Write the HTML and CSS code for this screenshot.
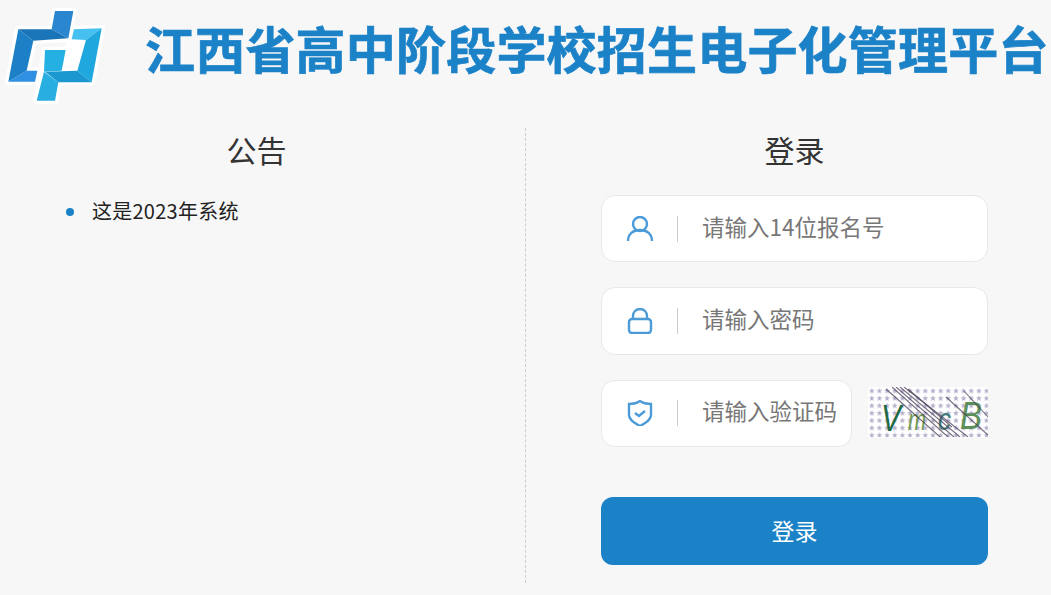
FILE: index.html
```html
<!DOCTYPE html>
<html lang="zh-CN">
<head>
    <meta charset="UTF-8">
    <title>江西省高中阶段学校招生电子化管理平台</title>
    <link rel="stylesheet" href="styles.css">
</head>
<body>
    <div class="header">
        <svg class="logo" viewBox="0 0 330 330">
            <!-- white outline behind the mark -->
            <g fill="#fff" stroke="#fff" stroke-width="20" stroke-linejoin="round">
                <polygon points="165,33 220,33 205,115 100,122 80,212 112,212 105,245 25,245 55,88 155,88"/>
                <polygon points="222,88 305,85 275,247 175,247 165,302 110,302 135,150 197,150 215,118"/>
            </g>
            <polygon fill="#1d7fc6" points="55,88 25,245 80,212 100,122"/>
            <polygon fill="#1a75b8" points="55,88 155,88 205,115 100,122"/>
            <polygon fill="#2a86cf" points="165,33 220,33 205,115 155,88"/>
            <polygon fill="#2f8fe0" points="25,245 105,245 112,212 80,212"/>
            <polygon fill="#45c0f0" points="222,88 305,85 258,120 215,118"/>
            <polygon fill="#1fa8de" points="305,85 275,247 232,212 258,120"/>
            <polygon fill="#1b98cf" points="135,215 232,212 275,247 175,247"/>
            <polygon fill="#25b0e4" points="135,150 197,150 185,212 132,215"/>
            <polygon fill="#29aee2" points="132,215 175,247 165,302 110,302"/>
        </svg>
        <h1 class="site-title">江西省高中阶段学校招生电子化管理平台</h1>
    </div>

    <div class="main">
        <div class="notice">
            <h2 class="panel-title">公告</h2>
            <ul class="notice-list">
                <li>这是2023年系统</li>
            </ul>
        </div>

        <div class="login">
            <h2 class="panel-title">登录</h2>
            <div class="field">
                <svg class="field-icon" viewBox="2 2 26 26">
                    <circle cx="15" cy="10" r="7"/>
                    <path d="M3 27c0-7 5-11 12-11s12 4 12 11"/>
                </svg>
                <input type="text" placeholder="请输入14位报名号">
            </div>
            <div class="field">
                <svg class="field-icon" viewBox="2 2 26 26">
                    <rect x="4" y="13" width="22" height="14" rx="3"/>
                    <path d="M8 13v-3c0-4 3-7 7-7s7 3 7 7v3"/>
                </svg>
                <input type="password" placeholder="请输入密码">
            </div>
            <div class="code-row">
                <div class="field field-code">
                    <svg class="field-icon" viewBox="2 2 26 26">
                        <path d="M15 3c3 2 7 3 11 3v11c0 5-5 8-11 11C9 25 4 22 4 17V6c4 0 8-1 11-3z"/>
                        <path d="M10 15l4 3 6-5"/>
                    </svg>
                    <input type="text" placeholder="请输入验证码">
                </div>
                <svg class="captcha" viewBox="0 0 120 50">
                    <defs>
                        <pattern id="stars" width="7.65" height="7.4" patternUnits="userSpaceOnUse">
                            <rect width="7.65" height="7.4" fill="none"/>
                            <polygon class="star" points="3.8,0.8 4.6,3 6.8,3 5,4.4 5.7,6.6 3.8,5.3 1.9,6.6 2.6,4.4 0.8,3 3,3"/>
                        </pattern>
                    </defs>
                    <rect width="120" height="50" fill="#fff"/>
                    <rect width="120" height="50" fill="url(#stars)"/>
                    <text x="13" y="44" class="cap cap-v" textLength="20" lengthAdjust="spacingAndGlyphs">V</text>
                    <text x="40" y="43" class="cap cap-m" textLength="18" lengthAdjust="spacingAndGlyphs">m</text>
                    <text x="70" y="43" class="cap cap-c" textLength="13" lengthAdjust="spacingAndGlyphs">c</text>
                    <text x="92" y="42" class="cap cap-b" textLength="22" lengthAdjust="spacingAndGlyphs">B</text>
                    <g class="noise">
                        <line x1="18" y1="2" x2="72" y2="50"/>
                        <line x1="24" y1="0" x2="80" y2="50"/>
                        <line x1="28" y1="0" x2="86" y2="50"/>
                        <line x1="32" y1="0" x2="92" y2="50"/>
                        <line x1="36" y1="0" x2="100" y2="50"/>
                        <line x1="40" y1="2" x2="84" y2="40"/>
                        <line x1="78" y1="10" x2="120" y2="48"/>
                        <line x1="96" y1="4" x2="120" y2="30"/>
                    </g>
                </svg>
            </div>
            <button class="login-btn">登录</button>
        </div>
    </div>
</body>
</html>
```

FILE: styles.css
```css
* {
    box-sizing: border-box;
}

html, body {
    height: 100%;
}

body {
    margin: 0;
    background: #f7f7f7;
    color: #333;
    font-family: "Noto Sans CJK SC", "Liberation Sans", sans-serif;
    overflow: hidden;
}

.header {
    display: flex;
    align-items: center;
    height: 110px;
}

.logo {
    width: 110px;
    height: 110px;
    flex: none;
}

.site-title {
    margin: -16px 0 0 35px;
    font-size: 50px;
    font-weight: 700;
    line-height: 60px;
    letter-spacing: 0.2px;
    color: #1c82c8;
    white-space: nowrap;
    -webkit-text-stroke: 0.7px #1c82c8;
}

.main {
    display: flex;
    margin-top: 18px;
    height: 455px;
}

.notice {
    width: 526px;
    padding-right: 12px;
    border-right: 1px dashed #ccc;
}

.panel-title {
    margin: 0;
    font-size: 30px;
    font-weight: 400;
    line-height: 42px;
    text-align: center;
}

.notice-list {
    margin: 26px 0 0;
    padding: 0 0 0 92px;
    list-style: none;
    font-size: 20px;
    line-height: 30px;
    letter-spacing: 0.25px;
    color: #222;
}

.notice-list li {
    position: relative;
}

.notice-list li::before {
    content: "";
    position: absolute;
    left: -26px;
    top: 12px;
    width: 8px;
    height: 8px;
    border-radius: 50%;
    background: #1c82c8;
}

.login {
    width: 387px;
    margin-left: 75px;
}

.login .panel-title {
    margin-bottom: 25px;
}

.field {
    display: flex;
    align-items: center;
    height: 67.4px;
    margin-bottom: 25px;
    background: #fff;
    border: 1px solid #e8e8e8;
    border-radius: 14px;
}

.field-icon {
    width: 26px;
    height: 26px;
    margin-left: 25px;
    flex: none;
    fill: none;
    stroke: #4a9bd8;
    stroke-width: 2.4;
}

.field input {
    flex: 1;
    min-width: 0;
    height: 26px;
    margin-left: 24px;
    padding: 0 0 6px 24px;
    border: none;
    border-left: 1px solid #ccc;
    outline: none;
    background: transparent;
    font-family: inherit;
    font-size: 22.5px;
}

.field input::placeholder {
    color: #777;
}

.code-row {
    display: flex;
    justify-content: space-between;
    align-items: flex-start;
}

.field-code {
    width: 251px;
    margin-bottom: 0;
}

.captcha {
    width: 120px;
    height: 50px;
    margin-top: 7px;
}

.star {
    fill: #b5accb;
}

.noise line {
    stroke: #4a3f55;
    stroke-width: 1.1;
    opacity: 0.75;
}

.cap {
    font-family: "Liberation Sans", sans-serif;
    font-size: 36px;
    font-style: italic;
}

.cap-v { fill: #1f6a45; }
.cap-m { fill: #6f9a55; font-size: 30px; }
.cap-c { fill: #3f7f80; font-size: 32px; }
.cap-b { fill: #5a8f5a; font-size: 38px; }

.login-btn {
    display: block;
    width: 100%;
    height: 68px;
    margin-top: 50px;
    padding-bottom: 4px;
    border: none;
    border-radius: 12px;
    background: #1c82c8;
    color: #fff;
    font-family: inherit;
    font-size: 23px;
}
```
